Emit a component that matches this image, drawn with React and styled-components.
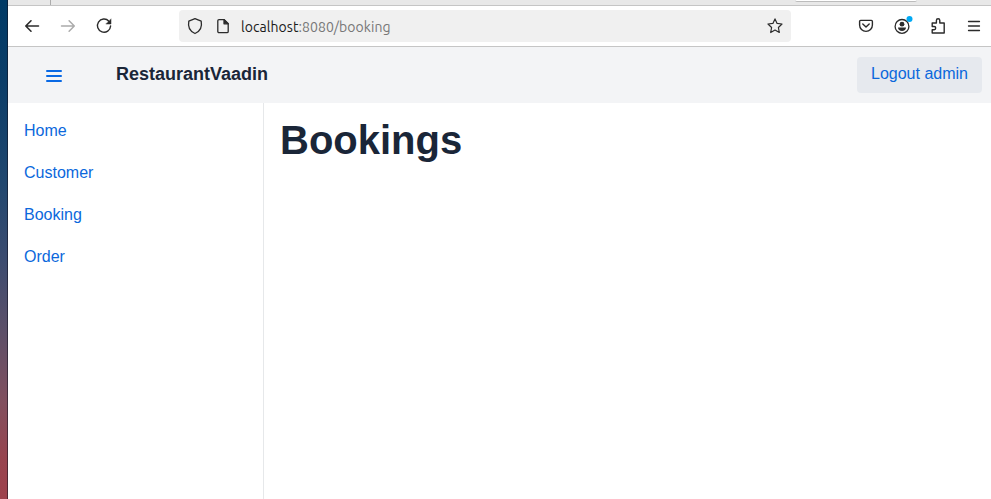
import React from "react";
import styled, { createGlobalStyle } from "styled-components";

const GlobalStyle = createGlobalStyle`
  * { box-sizing: border-box; }
  body { margin: 0; overflow: hidden; background: #fff; }
`;

const Desktop = styled.div`
  display: flex;
  width: 991px;
  height: 499px;
  overflow: hidden;
  font-family: "Liberation Sans", Arial, sans-serif;
`;

const Wallpaper = styled.div`
  flex: 0 0 8px;
  border-right: 1px solid rgba(15, 15, 30, 0.55);
  background: linear-gradient(#003a66 0%, #0b3d68 16%, #20476f 36%, #3c4c70 52%, #5c5069 66%, #80505f 80%, #98444f 92%, #9f414c 100%);
`;

const Browser = styled.div`
  flex: 1;
  display: flex;
  flex-direction: column;
  min-width: 0;
`;

const TabStrip = styled.div`
  display: flex;
  justify-content: space-between;
  flex: 0 0 6px;
  padding: 0 74px 0 42px;
  background: #e8e8e8;
  border-bottom: 1px solid #c5c5c5;
`;

const TabDivider = styled.span`
  width: 1px;
  height: 5px;
  background: #acacac;
`;

const TabEdge = styled.span`
  width: 122px;
  height: 2px;
  border-bottom: 1px solid #bcbcbc;
  border-radius: 0 0 4px 4px;
  background: #fff;
`;

const Toolbar = styled.div`
  display: flex;
  align-items: center;
  flex: 0 0 41px;
  padding: 0 7px 0 16px;
  border-bottom: 1px solid #c5c5c5;
  background: #fff;
`;

const NavButtons = styled.div`
  display: flex;
  gap: 20px;
  width: 155px;
`;

const AddressBar = styled.div`
  display: flex;
  align-items: center;
  width: 612px;
  height: 32px;
  padding: 0 6px 0 8px;
  border-radius: 4px;
  background: #f0f0f0;
`;

const Url = styled.span`
  width: 152px;
  margin-left: 8px;
  margin-right: auto;
  padding-top: 2px;
  color: #777;
  font: 14px/20px Ubuntu, "Noto Sans", sans-serif;
  letter-spacing: ${(p) => p.$tracking}px;
  white-space: nowrap;
`;

const Host = styled.span`
  color: #1a1a1a;
`;

const Actions = styled.div`
  display: flex;
  gap: 16px;
  margin-left: auto;
`;

const IconSvg = styled.svg`
  display: block;
  flex: none;
  width: 20px;
  height: 20px;
  margin-left: ${(p) => p.$offset || 0}px;
  overflow: visible;
  fill: none;
  stroke: ${(p) => p.$color || "#2b2b2b"};
  stroke-width: ${(p) => p.$weight || 1.3};
  stroke-linecap: round;
  stroke-linejoin: round;
`;

const Icon = ({ children, ...rest }) => (
  <IconSvg viewBox="0 0 20 20" aria-hidden="true" {...rest}>{children}</IconSvg>
);

const AppHeader = styled.header`
  display: flex;
  align-items: center;
  flex: 0 0 56px;
  padding: 0 9px 0 38px;
  background: #f3f4f6;
`;

const DrawerToggle = styled.button`
  display: flex;
  flex-direction: column;
  gap: 3px;
  width: 16px;
  margin-top: 2px;
  padding: 0;
  border: 0;
  background: none;
`;

const ToggleBar = styled.span`
  width: 16px;
  height: 2px;
  border-radius: 1px;
  background: #0969e4;
`;

const AppName = styled.h2`
  margin: 0 auto 0 54px;
  padding-bottom: 2px;
  color: #1a2638;
  font-size: 18px;
  line-height: 24px;
`;

const LogoutButton = styled.button`
  width: 125px;
  height: 36px;
  padding: 0 0 3px;
  border: 0;
  border-radius: 4px;
  background: #e6e9ee;
  color: #0b68dc;
  font: 16px/20px "Liberation Sans", Arial, sans-serif;
  white-space: nowrap;
`;

const Body = styled.div`
  display: flex;
  flex: 1;
`;

const Drawer = styled.nav`
  display: flex;
  flex-direction: column;
  gap: 16px;
  width: 256px;
  padding: 15px 16px;
  border-right: 1px solid #e6e8ea;
`;

const DrawerLink = styled.a`
  color: #0b68dc;
  font-size: 16px;
  line-height: 26px;
`;

const Content = styled.main`
  padding: 12px 16px;
`;

const Title = styled.h1`
  margin: 0;
  color: #1a2638;
  font-size: 40px;
  line-height: 50px;
`;

const links = ["Home", "Customer", "Booking", "Order"];

export default function App() {
  return (
    <Desktop>
      <GlobalStyle />
      <Wallpaper />
      <Browser>
        <TabStrip><TabDivider /><TabEdge /></TabStrip>
        <Toolbar>
          <NavButtons>
            <Icon $offset={-2} $weight={1.6}><path d="M16.5 10H4M9 4.8 3.8 10 9 15.2" /></Icon>
            <Icon $offset={-4} $color="#ababab" $weight={1.5}><path d="M3.5 10H16.3M11.1 4.8 16.3 10l-5.2 5.2" /></Icon>
            <Icon $offset={-4} $weight={1.4}>
              <path d="M14.9 5.2A6.6 6.6 0 1 0 16.6 10" />
              <path d="M17 3.2V8h-4.8z" fill="#2b2b2b" strokeWidth="0.5" />
            </Icon>
          </NavButtons>
          <AddressBar>
            <Icon $offset={-2}><path d="M10 2.6 16.2 5.2C17.3 11 15 15.5 10 17.5 5 15.5 2.7 11 3.8 5.2Z" /></Icon>
            <Icon $offset={8}>
              <path d="M6 3.6h5.2l4 4v7.8a1.2 1.2 0 0 1-1.2 1.2H6a1.2 1.2 0 0 1-1.2-1.2V4.8A1.2 1.2 0 0 1 6 3.6Z" />
              <path d="M11 3.6v4.2h4.2z" fill="#2b2b2b" />
            </Icon>
            <Url $tracking={0.06}><Host>localhost</Host>:8080/booking</Url>
            <Icon $weight={1.2}><path d="m10 2.9 2.1 4.5 4.9.6-3.6 3.5.9 5L10 14.1l-4.3 2.4.9-5L3 8l4.9-.6Z" /></Icon>
          </AddressBar>
          <Actions>
            <Icon $weight={1.4}><path d="M4.6 4.4h10.8a1 1 0 0 1 1 1V9a6.4 6.4 0 0 1-12.8 0V5.4a1 1 0 0 1 1-1ZM6.8 8 10 11l3.2-3" /></Icon>
            <Icon $weight={1.3}>
              <circle cx="10" cy="10.4" r="6.9" />
              <circle cx="10" cy="8.2" r="2.4" fill="#2b2b2b" stroke="none" />
              <path d="M6 11.6h8c0 2-1.7 3.5-4 3.5s-4-1.5-4-3.5Z" fill="#2b2b2b" stroke="none" />
              <circle cx="17.5" cy="2.9" r="3" fill="#00a9f4" stroke="none" />
            </Icon>
            <Icon $weight={1.4}><path d="M4.2 17v-3.3h1.9a1.6 1.6 0 0 0 0-3.2H4.2V7h4.2V4.4a1.7 1.7 0 0 1 3.4 0V7h4.4v10Z" /></Icon>
            <Icon $weight={1.3}><path d="M4.5 5.5h11M4.5 10h11M4.5 14.5h11" /></Icon>
          </Actions>
        </Toolbar>
        <AppHeader>
          <DrawerToggle aria-label="Toggle navigation"><ToggleBar /><ToggleBar /><ToggleBar /></DrawerToggle>
          <AppName>RestaurantVaadin</AppName>
          <LogoutButton>Logout admin</LogoutButton>
        </AppHeader>
        <Body>
          <Drawer>{links.map((label) => <DrawerLink key={label}>{label}</DrawerLink>)}</Drawer>
          <Content><Title>Bookings</Title></Content>
        </Body>
      </Browser>
    </Desktop>
  );
}
